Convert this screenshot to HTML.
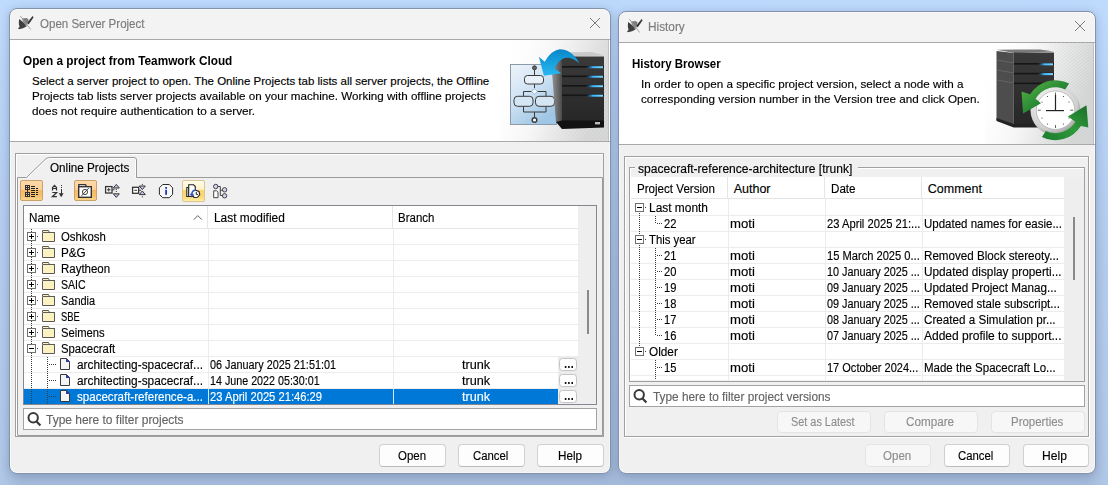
<!DOCTYPE html>
<html><head><meta charset="utf-8">
<style>
*{margin:0;padding:0;box-sizing:border-box}
html,body{width:1108px;height:485px;overflow:hidden}
body{position:relative;font-family:"Liberation Sans",sans-serif;font-size:11.5px;color:#000;
background:linear-gradient(90deg,rgba(200,225,255,.35) 0,rgba(200,225,255,0) 2%,rgba(200,225,255,0) 98%,rgba(200,225,255,.35) 100%),linear-gradient(180deg,#bcd8fb 0%,#b3cef3 15%,#a9c1e4 55%,#a4badb 100%)}
.a{position:absolute}
.t{position:absolute;white-space:nowrap;line-height:16px;height:16px;transform-origin:0 0;-webkit-text-stroke:0.15px currentColor}
.win{position:absolute;background:linear-gradient(#f3f3f3 0,#f3f3f3 30px,#f0f0f0 30px);border:1px solid #8294ad;border-radius:8px;
box-shadow:inset 0 0 0 1px #f8f8f8,0 2px 8px rgba(40,55,85,.24)}
.btn{position:absolute;background:#fdfdfd;border:1px solid #d0d0d0;border-bottom-color:#bcbcbc;border-radius:4px}
.btn.dis{background:#f7f7f7;border-color:#e4e4e4}
svg.ov{position:absolute;left:0;top:0;overflow:visible}
</style></head><body>

<div class="win" style="left:9px;top:8px;width:602px;height:466px"></div>
<div class="win" style="left:618px;top:11px;width:478px;height:463px"></div>

<svg class="ov" width="1108" height="485" shape-rendering="crispEdges"><rect x="10" y="39" width="600" height="1" fill="#a9a9a9"/>
<rect x="10" y="40" width="600" height="101" fill="#ffffff"/>
<rect x="10" y="141" width="600" height="1" fill="#a9a9a9"/>
<rect x="15" y="153" width="589" height="1" fill="#a0a0a0"/>
<rect x="15" y="436" width="589" height="1" fill="#a0a0a0"/>
<rect x="15" y="153" width="1" height="284" fill="#a0a0a0"/>
<rect x="603" y="153" width="1" height="284" fill="#a0a0a0"/>
<rect x="16" y="154" width="587" height="1" fill="#ffffff"/>
<rect x="16" y="154" width="1" height="282" fill="#ffffff"/>
<path d="M28.5 177.5 L45.8 160.2 Q47.8 158.5 50.5 158.5 H135.5 V177" fill="none" stroke="#ffffff" shape-rendering="geometricPrecision"/>
<path d="M17.5 435 V177.5 H26.5 L45 159.6 Q47 157.5 49.5 157.5 H134 Q136.5 157.5 136.5 160 V177.5 H602.5 V435.5 H17.5" fill="none" stroke="#9a9a9a" shape-rendering="geometricPrecision"/>
<rect x="23" y="205" width="574" height="200" fill="#828790"/>
<rect x="24" y="206" width="572" height="198" fill="#ffffff"/>
<rect x="578" y="206" width="18" height="198" fill="#eeeeee"/>
<rect x="587" y="290" width="2" height="44" fill="#8a8a8a"/>
<rect x="207" y="206" width="1" height="22" fill="#e5e5e5"/>
<rect x="392" y="206" width="1" height="22" fill="#e5e5e5"/>
<rect x="24" y="228" width="554" height="1" fill="#e5e5e5"/>
<rect x="24" y="244" width="554" height="1" fill="#ececec"/>
<rect x="24" y="260" width="554" height="1" fill="#ececec"/>
<rect x="24" y="276" width="554" height="1" fill="#ececec"/>
<rect x="24" y="292" width="554" height="1" fill="#ececec"/>
<rect x="24" y="308" width="554" height="1" fill="#ececec"/>
<rect x="24" y="324" width="554" height="1" fill="#ececec"/>
<rect x="24" y="340" width="554" height="1" fill="#ececec"/>
<rect x="24" y="356" width="554" height="1" fill="#ececec"/>
<rect x="24" y="372" width="554" height="1" fill="#ececec"/>
<rect x="24" y="388" width="554" height="1" fill="#ececec"/>
<rect x="208" y="229" width="1" height="175" fill="#ececec"/>
<rect x="393" y="229" width="1" height="175" fill="#ececec"/>
<rect x="24" y="389" width="534" height="15" fill="#0078d7"/>
<rect x="208" y="389" width="1" height="15" fill="#d8e8f8"/>
<rect x="393" y="389" width="1" height="15" fill="#d8e8f8"/>
<path d="M193.8 219.6 L197.8 215.6 L201.8 219.6" fill="none" stroke="#606060" shape-rendering="geometricPrecision"/>
<rect x="31" y="229" width="1" height="1" fill="#3c3c3c"/>
<rect x="31" y="231" width="1" height="1" fill="#3c3c3c"/>
<rect x="31" y="233" width="1" height="1" fill="#3c3c3c"/>
<rect x="31" y="235" width="1" height="1" fill="#3c3c3c"/>
<rect x="31" y="237" width="1" height="1" fill="#3c3c3c"/>
<rect x="31" y="239" width="1" height="1" fill="#3c3c3c"/>
<rect x="31" y="241" width="1" height="1" fill="#3c3c3c"/>
<rect x="31" y="243" width="1" height="1" fill="#3c3c3c"/>
<rect x="31" y="245" width="1" height="1" fill="#3c3c3c"/>
<rect x="31" y="247" width="1" height="1" fill="#3c3c3c"/>
<rect x="31" y="249" width="1" height="1" fill="#3c3c3c"/>
<rect x="31" y="251" width="1" height="1" fill="#3c3c3c"/>
<rect x="31" y="253" width="1" height="1" fill="#3c3c3c"/>
<rect x="31" y="255" width="1" height="1" fill="#3c3c3c"/>
<rect x="31" y="257" width="1" height="1" fill="#3c3c3c"/>
<rect x="31" y="259" width="1" height="1" fill="#3c3c3c"/>
<rect x="31" y="261" width="1" height="1" fill="#3c3c3c"/>
<rect x="31" y="263" width="1" height="1" fill="#3c3c3c"/>
<rect x="31" y="265" width="1" height="1" fill="#3c3c3c"/>
<rect x="31" y="267" width="1" height="1" fill="#3c3c3c"/>
<rect x="31" y="269" width="1" height="1" fill="#3c3c3c"/>
<rect x="31" y="271" width="1" height="1" fill="#3c3c3c"/>
<rect x="31" y="273" width="1" height="1" fill="#3c3c3c"/>
<rect x="31" y="275" width="1" height="1" fill="#3c3c3c"/>
<rect x="31" y="277" width="1" height="1" fill="#3c3c3c"/>
<rect x="31" y="279" width="1" height="1" fill="#3c3c3c"/>
<rect x="31" y="281" width="1" height="1" fill="#3c3c3c"/>
<rect x="31" y="283" width="1" height="1" fill="#3c3c3c"/>
<rect x="31" y="285" width="1" height="1" fill="#3c3c3c"/>
<rect x="31" y="287" width="1" height="1" fill="#3c3c3c"/>
<rect x="31" y="289" width="1" height="1" fill="#3c3c3c"/>
<rect x="31" y="291" width="1" height="1" fill="#3c3c3c"/>
<rect x="31" y="293" width="1" height="1" fill="#3c3c3c"/>
<rect x="31" y="295" width="1" height="1" fill="#3c3c3c"/>
<rect x="31" y="297" width="1" height="1" fill="#3c3c3c"/>
<rect x="31" y="299" width="1" height="1" fill="#3c3c3c"/>
<rect x="31" y="301" width="1" height="1" fill="#3c3c3c"/>
<rect x="31" y="303" width="1" height="1" fill="#3c3c3c"/>
<rect x="31" y="305" width="1" height="1" fill="#3c3c3c"/>
<rect x="31" y="307" width="1" height="1" fill="#3c3c3c"/>
<rect x="31" y="309" width="1" height="1" fill="#3c3c3c"/>
<rect x="31" y="311" width="1" height="1" fill="#3c3c3c"/>
<rect x="31" y="313" width="1" height="1" fill="#3c3c3c"/>
<rect x="31" y="315" width="1" height="1" fill="#3c3c3c"/>
<rect x="31" y="317" width="1" height="1" fill="#3c3c3c"/>
<rect x="31" y="319" width="1" height="1" fill="#3c3c3c"/>
<rect x="31" y="321" width="1" height="1" fill="#3c3c3c"/>
<rect x="31" y="323" width="1" height="1" fill="#3c3c3c"/>
<rect x="31" y="325" width="1" height="1" fill="#3c3c3c"/>
<rect x="31" y="327" width="1" height="1" fill="#3c3c3c"/>
<rect x="31" y="329" width="1" height="1" fill="#3c3c3c"/>
<rect x="31" y="331" width="1" height="1" fill="#3c3c3c"/>
<rect x="31" y="333" width="1" height="1" fill="#3c3c3c"/>
<rect x="31" y="335" width="1" height="1" fill="#3c3c3c"/>
<rect x="31" y="337" width="1" height="1" fill="#3c3c3c"/>
<rect x="31" y="339" width="1" height="1" fill="#3c3c3c"/>
<rect x="31" y="341" width="1" height="1" fill="#3c3c3c"/>
<rect x="31" y="343" width="1" height="1" fill="#3c3c3c"/>
<rect x="31" y="345" width="1" height="1" fill="#3c3c3c"/>
<rect x="31" y="347" width="1" height="1" fill="#3c3c3c"/>
<rect x="31" y="349" width="1" height="1" fill="#3c3c3c"/>
<rect x="31" y="351" width="1" height="1" fill="#3c3c3c"/>
<rect x="31" y="353" width="1" height="1" fill="#3c3c3c"/>
<rect x="31" y="355" width="1" height="1" fill="#3c3c3c"/>
<rect x="31" y="357" width="1" height="1" fill="#3c3c3c"/>
<rect x="31" y="359" width="1" height="1" fill="#3c3c3c"/>
<rect x="31" y="361" width="1" height="1" fill="#3c3c3c"/>
<rect x="31" y="363" width="1" height="1" fill="#3c3c3c"/>
<rect x="31" y="365" width="1" height="1" fill="#3c3c3c"/>
<rect x="31" y="367" width="1" height="1" fill="#3c3c3c"/>
<rect x="31" y="369" width="1" height="1" fill="#3c3c3c"/>
<rect x="31" y="371" width="1" height="1" fill="#3c3c3c"/>
<rect x="31" y="373" width="1" height="1" fill="#3c3c3c"/>
<rect x="31" y="375" width="1" height="1" fill="#3c3c3c"/>
<rect x="31" y="377" width="1" height="1" fill="#3c3c3c"/>
<rect x="31" y="379" width="1" height="1" fill="#3c3c3c"/>
<rect x="31" y="381" width="1" height="1" fill="#3c3c3c"/>
<rect x="31" y="383" width="1" height="1" fill="#3c3c3c"/>
<rect x="31" y="385" width="1" height="1" fill="#3c3c3c"/>
<rect x="31" y="387" width="1" height="1" fill="#3c3c3c"/>
<rect x="31" y="389" width="1" height="1" fill="#3c3c3c"/>
<rect x="31" y="391" width="1" height="1" fill="#3c3c3c"/>
<rect x="31" y="393" width="1" height="1" fill="#3c3c3c"/>
<rect x="31" y="395" width="1" height="1" fill="#3c3c3c"/>
<rect x="31" y="397" width="1" height="1" fill="#3c3c3c"/>
<rect x="31" y="399" width="1" height="1" fill="#3c3c3c"/>
<rect x="31" y="401" width="1" height="1" fill="#3c3c3c"/>
<rect x="31" y="403" width="1" height="1" fill="#3c3c3c"/>
<rect x="27" y="232" width="9" height="9" fill="#ffffff"/>
<rect x="27" y="232" width="9" height="9" fill="#707070"/>
<rect x="28" y="233" width="7" height="7" fill="#ffffff"/>
<rect x="29" y="236" width="5" height="1" fill="#000"/>
<rect x="31" y="234" width="1" height="5" fill="#000"/>
<rect x="37" y="236" width="1" height="1" fill="#3c3c3c"/>
<path d="M42.5 232.5 V230.5 H48.5 L49.5 232.5 H54.5 V241.5 H42.5 Z" fill="#fcf1c0" stroke="#5a5a5a" shape-rendering="geometricPrecision"/>
<rect x="43" y="232" width="12" height="1" fill="#5a5a5a"/>
<rect x="27" y="248" width="9" height="9" fill="#ffffff"/>
<rect x="27" y="248" width="9" height="9" fill="#707070"/>
<rect x="28" y="249" width="7" height="7" fill="#ffffff"/>
<rect x="29" y="252" width="5" height="1" fill="#000"/>
<rect x="31" y="250" width="1" height="5" fill="#000"/>
<rect x="37" y="252" width="1" height="1" fill="#3c3c3c"/>
<path d="M42.5 248.5 V246.5 H48.5 L49.5 248.5 H54.5 V257.5 H42.5 Z" fill="#fcf1c0" stroke="#5a5a5a" shape-rendering="geometricPrecision"/>
<rect x="43" y="248" width="12" height="1" fill="#5a5a5a"/>
<rect x="27" y="264" width="9" height="9" fill="#ffffff"/>
<rect x="27" y="264" width="9" height="9" fill="#707070"/>
<rect x="28" y="265" width="7" height="7" fill="#ffffff"/>
<rect x="29" y="268" width="5" height="1" fill="#000"/>
<rect x="31" y="266" width="1" height="5" fill="#000"/>
<rect x="37" y="268" width="1" height="1" fill="#3c3c3c"/>
<path d="M42.5 264.5 V262.5 H48.5 L49.5 264.5 H54.5 V273.5 H42.5 Z" fill="#fcf1c0" stroke="#5a5a5a" shape-rendering="geometricPrecision"/>
<rect x="43" y="264" width="12" height="1" fill="#5a5a5a"/>
<rect x="27" y="280" width="9" height="9" fill="#ffffff"/>
<rect x="27" y="280" width="9" height="9" fill="#707070"/>
<rect x="28" y="281" width="7" height="7" fill="#ffffff"/>
<rect x="29" y="284" width="5" height="1" fill="#000"/>
<rect x="31" y="282" width="1" height="5" fill="#000"/>
<rect x="37" y="284" width="1" height="1" fill="#3c3c3c"/>
<path d="M42.5 280.5 V278.5 H48.5 L49.5 280.5 H54.5 V289.5 H42.5 Z" fill="#fcf1c0" stroke="#5a5a5a" shape-rendering="geometricPrecision"/>
<rect x="43" y="280" width="12" height="1" fill="#5a5a5a"/>
<rect x="27" y="296" width="9" height="9" fill="#ffffff"/>
<rect x="27" y="296" width="9" height="9" fill="#707070"/>
<rect x="28" y="297" width="7" height="7" fill="#ffffff"/>
<rect x="29" y="300" width="5" height="1" fill="#000"/>
<rect x="31" y="298" width="1" height="5" fill="#000"/>
<rect x="37" y="300" width="1" height="1" fill="#3c3c3c"/>
<path d="M42.5 296.5 V294.5 H48.5 L49.5 296.5 H54.5 V305.5 H42.5 Z" fill="#fcf1c0" stroke="#5a5a5a" shape-rendering="geometricPrecision"/>
<rect x="43" y="296" width="12" height="1" fill="#5a5a5a"/>
<rect x="27" y="312" width="9" height="9" fill="#ffffff"/>
<rect x="27" y="312" width="9" height="9" fill="#707070"/>
<rect x="28" y="313" width="7" height="7" fill="#ffffff"/>
<rect x="29" y="316" width="5" height="1" fill="#000"/>
<rect x="31" y="314" width="1" height="5" fill="#000"/>
<rect x="37" y="316" width="1" height="1" fill="#3c3c3c"/>
<path d="M42.5 312.5 V310.5 H48.5 L49.5 312.5 H54.5 V321.5 H42.5 Z" fill="#fcf1c0" stroke="#5a5a5a" shape-rendering="geometricPrecision"/>
<rect x="43" y="312" width="12" height="1" fill="#5a5a5a"/>
<rect x="27" y="328" width="9" height="9" fill="#ffffff"/>
<rect x="27" y="328" width="9" height="9" fill="#707070"/>
<rect x="28" y="329" width="7" height="7" fill="#ffffff"/>
<rect x="29" y="332" width="5" height="1" fill="#000"/>
<rect x="31" y="330" width="1" height="5" fill="#000"/>
<rect x="37" y="332" width="1" height="1" fill="#3c3c3c"/>
<path d="M42.5 328.5 V326.5 H48.5 L49.5 328.5 H54.5 V337.5 H42.5 Z" fill="#fcf1c0" stroke="#5a5a5a" shape-rendering="geometricPrecision"/>
<rect x="43" y="328" width="12" height="1" fill="#5a5a5a"/>
<rect x="27" y="344" width="9" height="9" fill="#ffffff"/>
<rect x="27" y="344" width="9" height="9" fill="#707070"/>
<rect x="28" y="345" width="7" height="7" fill="#ffffff"/>
<rect x="29" y="348" width="5" height="1" fill="#000"/>
<rect x="37" y="348" width="1" height="1" fill="#3c3c3c"/>
<path d="M42.5 344.5 V342.5 H48.5 L49.5 344.5 H54.5 V353.5 H42.5 Z" fill="#fcf1c0" stroke="#5a5a5a" shape-rendering="geometricPrecision"/>
<rect x="43" y="344" width="12" height="1" fill="#5a5a5a"/>
<rect x="47" y="357" width="1" height="1" fill="#3c3c3c"/>
<rect x="47" y="359" width="1" height="1" fill="#3c3c3c"/>
<rect x="47" y="361" width="1" height="1" fill="#3c3c3c"/>
<rect x="47" y="363" width="1" height="1" fill="#3c3c3c"/>
<rect x="47" y="365" width="1" height="1" fill="#3c3c3c"/>
<rect x="47" y="367" width="1" height="1" fill="#3c3c3c"/>
<rect x="47" y="369" width="1" height="1" fill="#3c3c3c"/>
<rect x="47" y="371" width="1" height="1" fill="#3c3c3c"/>
<rect x="47" y="373" width="1" height="1" fill="#3c3c3c"/>
<rect x="47" y="375" width="1" height="1" fill="#3c3c3c"/>
<rect x="47" y="377" width="1" height="1" fill="#3c3c3c"/>
<rect x="47" y="379" width="1" height="1" fill="#3c3c3c"/>
<rect x="47" y="381" width="1" height="1" fill="#3c3c3c"/>
<rect x="47" y="383" width="1" height="1" fill="#3c3c3c"/>
<rect x="47" y="385" width="1" height="1" fill="#3c3c3c"/>
<rect x="47" y="387" width="1" height="1" fill="#3c3c3c"/>
<rect x="47" y="389" width="1" height="1" fill="#3c3c3c"/>
<rect x="47" y="391" width="1" height="1" fill="#3c3c3c"/>
<rect x="47" y="393" width="1" height="1" fill="#3c3c3c"/>
<rect x="47" y="395" width="1" height="1" fill="#3c3c3c"/>
<rect x="47" y="397" width="1" height="1" fill="#3c3c3c"/>
<rect x="47" y="399" width="1" height="1" fill="#3c3c3c"/>
<rect x="47" y="401" width="1" height="1" fill="#3c3c3c"/>
<rect x="47" y="403" width="1" height="1" fill="#3c3c3c"/>
<rect x="49" y="364" width="1" height="1" fill="#3c3c3c"/>
<rect x="51" y="364" width="1" height="1" fill="#3c3c3c"/>
<rect x="53" y="364" width="1" height="1" fill="#3c3c3c"/>
<rect x="55" y="364" width="1" height="1" fill="#3c3c3c"/>
<path d="M60.5 358.5 H66.5 L69.5 361.5 V369.5 H60.5 Z" fill="#f4f4f4" stroke="#3a3a3a" shape-rendering="geometricPrecision"/>
<path d="M66 358 L70 362 H66 Z" fill="#2c3e9e" shape-rendering="geometricPrecision"/>
<rect x="558" y="357" width="20" height="15" fill="#ececec"/>
<rect x="559.5" y="358.5" width="17" height="12" rx="3" fill="#fff" stroke="#c4c4c4" shape-rendering="geometricPrecision"/>
<rect x="564.8" y="366" width="1.6" height="2" fill="#111" shape-rendering="geometricPrecision"/>
<rect x="568.0999999999999" y="366" width="1.6" height="2" fill="#111" shape-rendering="geometricPrecision"/>
<rect x="571.4" y="366" width="1.6" height="2" fill="#111" shape-rendering="geometricPrecision"/>
<rect x="49" y="380" width="1" height="1" fill="#3c3c3c"/>
<rect x="51" y="380" width="1" height="1" fill="#3c3c3c"/>
<rect x="53" y="380" width="1" height="1" fill="#3c3c3c"/>
<rect x="55" y="380" width="1" height="1" fill="#3c3c3c"/>
<path d="M60.5 374.5 H66.5 L69.5 377.5 V385.5 H60.5 Z" fill="#f4f4f4" stroke="#3a3a3a" shape-rendering="geometricPrecision"/>
<path d="M66 374 L70 378 H66 Z" fill="#2c3e9e" shape-rendering="geometricPrecision"/>
<rect x="558" y="373" width="20" height="15" fill="#ececec"/>
<rect x="559.5" y="374.5" width="17" height="12" rx="3" fill="#fff" stroke="#c4c4c4" shape-rendering="geometricPrecision"/>
<rect x="564.8" y="382" width="1.6" height="2" fill="#111" shape-rendering="geometricPrecision"/>
<rect x="568.0999999999999" y="382" width="1.6" height="2" fill="#111" shape-rendering="geometricPrecision"/>
<rect x="571.4" y="382" width="1.6" height="2" fill="#111" shape-rendering="geometricPrecision"/>
<rect x="49" y="396" width="1" height="1" fill="#3c3c3c"/>
<rect x="51" y="396" width="1" height="1" fill="#3c3c3c"/>
<rect x="53" y="396" width="1" height="1" fill="#3c3c3c"/>
<rect x="55" y="396" width="1" height="1" fill="#3c3c3c"/>
<path d="M60.5 390.5 H66.5 L69.5 393.5 V401.5 H60.5 Z" fill="#f4f4f4" stroke="#3a3a3a" shape-rendering="geometricPrecision"/>
<path d="M66 390 L70 394 H66 Z" fill="#2c3e9e" shape-rendering="geometricPrecision"/>
<rect x="558" y="389" width="20" height="15" fill="#ececec"/>
<rect x="559.5" y="390.5" width="17" height="12" rx="3" fill="#fff" stroke="#c4c4c4" shape-rendering="geometricPrecision"/>
<rect x="564.8" y="398" width="1.6" height="2" fill="#111" shape-rendering="geometricPrecision"/>
<rect x="568.0999999999999" y="398" width="1.6" height="2" fill="#111" shape-rendering="geometricPrecision"/>
<rect x="571.4" y="398" width="1.6" height="2" fill="#111" shape-rendering="geometricPrecision"/>
<rect x="23" y="408" width="574" height="22" fill="#a3a3a3"/>
<rect x="24" y="409" width="572" height="20" fill="#ffffff"/>
<g shape-rendering="geometricPrecision"><circle cx="33.2" cy="417.8" r="4.7" fill="none" stroke="#3a3a3a" stroke-width="2"/><path d="M36.6 421.4 L40.4 425.4" stroke="#3a3a3a" stroke-width="2.2"/></g>
<path d="M590 18 L600 28 M600 18 L590 28" stroke="#767676" stroke-width="0.95" shape-rendering="geometricPrecision"/>
<rect x="619" y="42" width="476" height="1" fill="#a9a9a9"/>
<rect x="619" y="43" width="476" height="101" fill="#ffffff"/>
<rect x="619" y="144" width="476" height="1" fill="#a9a9a9"/>
<path d="M1075 21 L1085 31 M1085 21 L1075 31" stroke="#767676" stroke-width="0.95" shape-rendering="geometricPrecision"/>
<rect x="624" y="156" width="465" height="1" fill="#a0a0a0"/>
<rect x="624" y="436" width="465" height="1" fill="#a0a0a0"/>
<rect x="624" y="156" width="1" height="281" fill="#a0a0a0"/>
<rect x="1088" y="156" width="1" height="281" fill="#a0a0a0"/>
<rect x="625" y="157" width="463" height="1" fill="#ffffff"/>
<rect x="625" y="157" width="1" height="279" fill="#ffffff"/>
<rect x="624" y="437" width="466" height="1" fill="#ffffff"/>
<rect x="1089" y="156" width="1" height="282" fill="#ffffff"/>
<rect x="629" y="167" width="1" height="215" fill="#a0a0a0"/>
<rect x="630" y="168" width="1" height="213" fill="#ffffff"/>
<rect x="629" y="167" width="6" height="1" fill="#a0a0a0"/>
<rect x="630" y="168" width="5" height="1" fill="#ffffff"/>
<rect x="858" y="167" width="227" height="1" fill="#a0a0a0"/>
<rect x="858" y="168" width="226" height="1" fill="#ffffff"/>
<rect x="1084" y="167" width="1" height="215" fill="#a0a0a0"/>
<rect x="629" y="381" width="456" height="1" fill="#a0a0a0"/>
<rect x="631" y="177" width="452" height="203" fill="#ffffff"/>
<rect x="1064" y="177" width="20" height="203" fill="#eeeeee"/>
<rect x="1073" y="217" width="2" height="63" fill="#8a8a8a"/>
<rect x="631" y="198" width="433" height="1" fill="#e5e5e5"/>
<rect x="727" y="177" width="1" height="21" fill="#e5e5e5"/>
<rect x="824" y="177" width="1" height="21" fill="#e5e5e5"/>
<rect x="921" y="177" width="1" height="21" fill="#e5e5e5"/>
<rect x="631" y="215" width="433" height="1" fill="#ececec"/>
<rect x="631" y="231" width="433" height="1" fill="#ececec"/>
<rect x="631" y="247" width="433" height="1" fill="#ececec"/>
<rect x="631" y="263" width="433" height="1" fill="#ececec"/>
<rect x="631" y="279" width="433" height="1" fill="#ececec"/>
<rect x="631" y="295" width="433" height="1" fill="#ececec"/>
<rect x="631" y="311" width="433" height="1" fill="#ececec"/>
<rect x="631" y="327" width="433" height="1" fill="#ececec"/>
<rect x="631" y="343" width="433" height="1" fill="#ececec"/>
<rect x="631" y="359" width="433" height="1" fill="#ececec"/>
<rect x="631" y="375" width="433" height="1" fill="#ececec"/>
<rect x="728" y="199" width="1" height="181" fill="#ececec"/>
<rect x="825" y="199" width="1" height="181" fill="#ececec"/>
<rect x="922" y="199" width="1" height="181" fill="#ececec"/>
<rect x="639" y="213" width="1" height="1" fill="#3c3c3c"/>
<rect x="639" y="215" width="1" height="1" fill="#3c3c3c"/>
<rect x="639" y="217" width="1" height="1" fill="#3c3c3c"/>
<rect x="639" y="219" width="1" height="1" fill="#3c3c3c"/>
<rect x="639" y="221" width="1" height="1" fill="#3c3c3c"/>
<rect x="639" y="223" width="1" height="1" fill="#3c3c3c"/>
<rect x="639" y="225" width="1" height="1" fill="#3c3c3c"/>
<rect x="639" y="227" width="1" height="1" fill="#3c3c3c"/>
<rect x="639" y="229" width="1" height="1" fill="#3c3c3c"/>
<rect x="639" y="231" width="1" height="1" fill="#3c3c3c"/>
<rect x="639" y="233" width="1" height="1" fill="#3c3c3c"/>
<rect x="639" y="235" width="1" height="1" fill="#3c3c3c"/>
<rect x="639" y="237" width="1" height="1" fill="#3c3c3c"/>
<rect x="639" y="239" width="1" height="1" fill="#3c3c3c"/>
<rect x="639" y="241" width="1" height="1" fill="#3c3c3c"/>
<rect x="639" y="243" width="1" height="1" fill="#3c3c3c"/>
<rect x="639" y="245" width="1" height="1" fill="#3c3c3c"/>
<rect x="639" y="247" width="1" height="1" fill="#3c3c3c"/>
<rect x="639" y="249" width="1" height="1" fill="#3c3c3c"/>
<rect x="639" y="251" width="1" height="1" fill="#3c3c3c"/>
<rect x="639" y="253" width="1" height="1" fill="#3c3c3c"/>
<rect x="639" y="255" width="1" height="1" fill="#3c3c3c"/>
<rect x="639" y="257" width="1" height="1" fill="#3c3c3c"/>
<rect x="639" y="259" width="1" height="1" fill="#3c3c3c"/>
<rect x="639" y="261" width="1" height="1" fill="#3c3c3c"/>
<rect x="639" y="263" width="1" height="1" fill="#3c3c3c"/>
<rect x="639" y="265" width="1" height="1" fill="#3c3c3c"/>
<rect x="639" y="267" width="1" height="1" fill="#3c3c3c"/>
<rect x="639" y="269" width="1" height="1" fill="#3c3c3c"/>
<rect x="639" y="271" width="1" height="1" fill="#3c3c3c"/>
<rect x="639" y="273" width="1" height="1" fill="#3c3c3c"/>
<rect x="639" y="275" width="1" height="1" fill="#3c3c3c"/>
<rect x="639" y="277" width="1" height="1" fill="#3c3c3c"/>
<rect x="639" y="279" width="1" height="1" fill="#3c3c3c"/>
<rect x="639" y="281" width="1" height="1" fill="#3c3c3c"/>
<rect x="639" y="283" width="1" height="1" fill="#3c3c3c"/>
<rect x="639" y="285" width="1" height="1" fill="#3c3c3c"/>
<rect x="639" y="287" width="1" height="1" fill="#3c3c3c"/>
<rect x="639" y="289" width="1" height="1" fill="#3c3c3c"/>
<rect x="639" y="291" width="1" height="1" fill="#3c3c3c"/>
<rect x="639" y="293" width="1" height="1" fill="#3c3c3c"/>
<rect x="639" y="295" width="1" height="1" fill="#3c3c3c"/>
<rect x="639" y="297" width="1" height="1" fill="#3c3c3c"/>
<rect x="639" y="299" width="1" height="1" fill="#3c3c3c"/>
<rect x="639" y="301" width="1" height="1" fill="#3c3c3c"/>
<rect x="639" y="303" width="1" height="1" fill="#3c3c3c"/>
<rect x="639" y="305" width="1" height="1" fill="#3c3c3c"/>
<rect x="639" y="307" width="1" height="1" fill="#3c3c3c"/>
<rect x="639" y="309" width="1" height="1" fill="#3c3c3c"/>
<rect x="639" y="311" width="1" height="1" fill="#3c3c3c"/>
<rect x="639" y="313" width="1" height="1" fill="#3c3c3c"/>
<rect x="639" y="315" width="1" height="1" fill="#3c3c3c"/>
<rect x="639" y="317" width="1" height="1" fill="#3c3c3c"/>
<rect x="639" y="319" width="1" height="1" fill="#3c3c3c"/>
<rect x="639" y="321" width="1" height="1" fill="#3c3c3c"/>
<rect x="639" y="323" width="1" height="1" fill="#3c3c3c"/>
<rect x="639" y="325" width="1" height="1" fill="#3c3c3c"/>
<rect x="639" y="327" width="1" height="1" fill="#3c3c3c"/>
<rect x="639" y="329" width="1" height="1" fill="#3c3c3c"/>
<rect x="639" y="331" width="1" height="1" fill="#3c3c3c"/>
<rect x="639" y="333" width="1" height="1" fill="#3c3c3c"/>
<rect x="639" y="335" width="1" height="1" fill="#3c3c3c"/>
<rect x="639" y="337" width="1" height="1" fill="#3c3c3c"/>
<rect x="639" y="339" width="1" height="1" fill="#3c3c3c"/>
<rect x="639" y="341" width="1" height="1" fill="#3c3c3c"/>
<rect x="639" y="343" width="1" height="1" fill="#3c3c3c"/>
<rect x="639" y="345" width="1" height="1" fill="#3c3c3c"/>
<rect x="635" y="204" width="9" height="9" fill="#fff"/>
<rect x="635" y="203" width="9" height="9" fill="#707070"/>
<rect x="636" y="204" width="7" height="7" fill="#ffffff"/>
<rect x="637" y="207" width="5" height="1" fill="#000"/>
<rect x="645" y="207" width="1" height="1" fill="#3c3c3c"/>
<rect x="657" y="223" width="1" height="1" fill="#3c3c3c"/>
<rect x="659" y="223" width="1" height="1" fill="#3c3c3c"/>
<rect x="661" y="223" width="1" height="1" fill="#3c3c3c"/>
<rect x="635" y="236" width="9" height="9" fill="#fff"/>
<rect x="635" y="235" width="9" height="9" fill="#707070"/>
<rect x="636" y="236" width="7" height="7" fill="#ffffff"/>
<rect x="637" y="239" width="5" height="1" fill="#000"/>
<rect x="645" y="239" width="1" height="1" fill="#3c3c3c"/>
<rect x="657" y="255" width="1" height="1" fill="#3c3c3c"/>
<rect x="659" y="255" width="1" height="1" fill="#3c3c3c"/>
<rect x="661" y="255" width="1" height="1" fill="#3c3c3c"/>
<rect x="657" y="271" width="1" height="1" fill="#3c3c3c"/>
<rect x="659" y="271" width="1" height="1" fill="#3c3c3c"/>
<rect x="661" y="271" width="1" height="1" fill="#3c3c3c"/>
<rect x="657" y="287" width="1" height="1" fill="#3c3c3c"/>
<rect x="659" y="287" width="1" height="1" fill="#3c3c3c"/>
<rect x="661" y="287" width="1" height="1" fill="#3c3c3c"/>
<rect x="657" y="303" width="1" height="1" fill="#3c3c3c"/>
<rect x="659" y="303" width="1" height="1" fill="#3c3c3c"/>
<rect x="661" y="303" width="1" height="1" fill="#3c3c3c"/>
<rect x="657" y="319" width="1" height="1" fill="#3c3c3c"/>
<rect x="659" y="319" width="1" height="1" fill="#3c3c3c"/>
<rect x="661" y="319" width="1" height="1" fill="#3c3c3c"/>
<rect x="657" y="335" width="1" height="1" fill="#3c3c3c"/>
<rect x="659" y="335" width="1" height="1" fill="#3c3c3c"/>
<rect x="661" y="335" width="1" height="1" fill="#3c3c3c"/>
<rect x="635" y="348" width="9" height="9" fill="#fff"/>
<rect x="635" y="347" width="9" height="9" fill="#707070"/>
<rect x="636" y="348" width="7" height="7" fill="#ffffff"/>
<rect x="637" y="351" width="5" height="1" fill="#000"/>
<rect x="645" y="351" width="1" height="1" fill="#3c3c3c"/>
<rect x="657" y="367" width="1" height="1" fill="#3c3c3c"/>
<rect x="659" y="367" width="1" height="1" fill="#3c3c3c"/>
<rect x="661" y="367" width="1" height="1" fill="#3c3c3c"/>
<rect x="655" y="216" width="1" height="1" fill="#3c3c3c"/>
<rect x="655" y="218" width="1" height="1" fill="#3c3c3c"/>
<rect x="655" y="220" width="1" height="1" fill="#3c3c3c"/>
<rect x="655" y="222" width="1" height="1" fill="#3c3c3c"/>
<rect x="655" y="248" width="1" height="1" fill="#3c3c3c"/>
<rect x="655" y="250" width="1" height="1" fill="#3c3c3c"/>
<rect x="655" y="252" width="1" height="1" fill="#3c3c3c"/>
<rect x="655" y="254" width="1" height="1" fill="#3c3c3c"/>
<rect x="655" y="256" width="1" height="1" fill="#3c3c3c"/>
<rect x="655" y="258" width="1" height="1" fill="#3c3c3c"/>
<rect x="655" y="260" width="1" height="1" fill="#3c3c3c"/>
<rect x="655" y="262" width="1" height="1" fill="#3c3c3c"/>
<rect x="655" y="264" width="1" height="1" fill="#3c3c3c"/>
<rect x="655" y="266" width="1" height="1" fill="#3c3c3c"/>
<rect x="655" y="268" width="1" height="1" fill="#3c3c3c"/>
<rect x="655" y="270" width="1" height="1" fill="#3c3c3c"/>
<rect x="655" y="272" width="1" height="1" fill="#3c3c3c"/>
<rect x="655" y="274" width="1" height="1" fill="#3c3c3c"/>
<rect x="655" y="276" width="1" height="1" fill="#3c3c3c"/>
<rect x="655" y="278" width="1" height="1" fill="#3c3c3c"/>
<rect x="655" y="280" width="1" height="1" fill="#3c3c3c"/>
<rect x="655" y="282" width="1" height="1" fill="#3c3c3c"/>
<rect x="655" y="284" width="1" height="1" fill="#3c3c3c"/>
<rect x="655" y="286" width="1" height="1" fill="#3c3c3c"/>
<rect x="655" y="288" width="1" height="1" fill="#3c3c3c"/>
<rect x="655" y="290" width="1" height="1" fill="#3c3c3c"/>
<rect x="655" y="292" width="1" height="1" fill="#3c3c3c"/>
<rect x="655" y="294" width="1" height="1" fill="#3c3c3c"/>
<rect x="655" y="296" width="1" height="1" fill="#3c3c3c"/>
<rect x="655" y="298" width="1" height="1" fill="#3c3c3c"/>
<rect x="655" y="300" width="1" height="1" fill="#3c3c3c"/>
<rect x="655" y="302" width="1" height="1" fill="#3c3c3c"/>
<rect x="655" y="304" width="1" height="1" fill="#3c3c3c"/>
<rect x="655" y="306" width="1" height="1" fill="#3c3c3c"/>
<rect x="655" y="308" width="1" height="1" fill="#3c3c3c"/>
<rect x="655" y="310" width="1" height="1" fill="#3c3c3c"/>
<rect x="655" y="312" width="1" height="1" fill="#3c3c3c"/>
<rect x="655" y="314" width="1" height="1" fill="#3c3c3c"/>
<rect x="655" y="316" width="1" height="1" fill="#3c3c3c"/>
<rect x="655" y="318" width="1" height="1" fill="#3c3c3c"/>
<rect x="655" y="320" width="1" height="1" fill="#3c3c3c"/>
<rect x="655" y="322" width="1" height="1" fill="#3c3c3c"/>
<rect x="655" y="324" width="1" height="1" fill="#3c3c3c"/>
<rect x="655" y="326" width="1" height="1" fill="#3c3c3c"/>
<rect x="655" y="328" width="1" height="1" fill="#3c3c3c"/>
<rect x="655" y="330" width="1" height="1" fill="#3c3c3c"/>
<rect x="655" y="332" width="1" height="1" fill="#3c3c3c"/>
<rect x="655" y="334" width="1" height="1" fill="#3c3c3c"/>
<rect x="655" y="360" width="1" height="1" fill="#3c3c3c"/>
<rect x="655" y="362" width="1" height="1" fill="#3c3c3c"/>
<rect x="655" y="364" width="1" height="1" fill="#3c3c3c"/>
<rect x="655" y="366" width="1" height="1" fill="#3c3c3c"/>
<rect x="655" y="368" width="1" height="1" fill="#3c3c3c"/>
<rect x="655" y="370" width="1" height="1" fill="#3c3c3c"/>
<rect x="655" y="372" width="1" height="1" fill="#3c3c3c"/>
<rect x="655" y="374" width="1" height="1" fill="#3c3c3c"/>
<rect x="655" y="376" width="1" height="1" fill="#3c3c3c"/>
<rect x="655" y="378" width="1" height="1" fill="#3c3c3c"/>
<rect x="629" y="385" width="456" height="22" fill="#a3a3a3"/>
<rect x="630" y="386" width="454" height="20" fill="#ffffff"/>
<g shape-rendering="geometricPrecision"><circle cx="639.2" cy="394.8" r="4.7" fill="none" stroke="#3a3a3a" stroke-width="2"/><path d="M642.6 398.4 L646.4 402.4" stroke="#3a3a3a" stroke-width="2.2"/></g></svg>
<div class="t" style="left:22.60px;top:53px;font-size:12px;color:#000;font-weight:bold;-webkit-text-stroke:0;transform:scaleX(0.9820);">Open a project from Teamwork Cloud</div>
<div class="t" style="left:32.00px;top:73px;font-size:11.5px;color:#000;">Select a server project to open. The Online Projects tab lists all server projects, the Offline</div>
<div class="t" style="left:32.00px;top:88px;font-size:11.5px;color:#000;transform:scaleX(1.0122);">Projects tab lists server projects available on your machine. Working with offline projects</div>
<div class="t" style="left:32.00px;top:103px;font-size:11.5px;color:#000;transform:scaleX(1.0235);">does not require authentication to a server.</div>
<div class="t" style="left:49.90px;top:160px;font-size:12px;color:#000;transform:scaleX(0.9746);">Online Projects</div>
<div class="a" style="left:20px;top:180px;width:23px;height:21px;border:1px solid #c9a26a;border-radius:2px;background:linear-gradient(#fdd9aa 0%,#fccf98 45%,#f6b862 50%,#f7c170 80%,#fad58a 100%)"></div>
<div class="a" style="left:74px;top:180px;width:23px;height:21px;border:1px solid #c9a26a;border-radius:2px;background:linear-gradient(#fdd9aa 0%,#fccf98 45%,#f6b862 50%,#f7c170 80%,#fad58a 100%)"></div>
<div class="a" style="left:182px;top:180px;width:23px;height:22px;border:1px solid #dcc690;border-radius:2px;background:linear-gradient(#fffcee 0%,#fff2c6 42%,#fcd46c 48%,#fcd877 80%,#fff0a8 100%)"></div>
<div class="t" style="left:29.20px;top:210px;font-size:12.5px;color:#000;transform:scaleX(0.9298);">Name</div>
<div class="t" style="left:214.00px;top:210px;font-size:12.5px;color:#000;transform:scaleX(0.9524);">Last modified</div>
<div class="t" style="left:398.40px;top:210px;font-size:12.5px;color:#000;transform:scaleX(0.9191);">Branch</div>
<div class="t" style="left:60.70px;top:229px;font-size:12.5px;color:#000;transform:scaleX(0.9082);">Oshkosh</div>
<div class="t" style="left:60.70px;top:245px;font-size:12.5px;color:#000;transform:scaleX(0.9357);">P&amp;G</div>
<div class="t" style="left:60.70px;top:261px;font-size:12.5px;color:#000;transform:scaleX(0.9177);">Raytheon</div>
<div class="t" style="left:60.70px;top:277px;font-size:12.5px;color:#000;transform:scaleX(0.8466);">SAIC</div>
<div class="t" style="left:60.70px;top:293px;font-size:12.5px;color:#000;transform:scaleX(0.8762);">Sandia</div>
<div class="t" style="left:60.70px;top:309px;font-size:12.5px;color:#000;transform:scaleX(0.7516);">SBE</div>
<div class="t" style="left:60.70px;top:325px;font-size:12.5px;color:#000;transform:scaleX(0.8986);">Seimens</div>
<div class="t" style="left:60.70px;top:341px;font-size:12.5px;color:#000;transform:scaleX(0.9071);">Spacecraft</div>
<div class="t" style="left:76.70px;top:357px;font-size:12.5px;color:#000;transform:scaleX(0.9496);">architecting-spacecraf...</div>
<div class="t" style="left:209.70px;top:357px;font-size:12.5px;color:#000;transform:scaleX(0.8675);">06 January 2025 21:51:01</div>
<div class="t" style="left:461.50px;top:357px;font-size:12.5px;color:#000;transform:scaleX(1.0149);">trunk</div>
<div class="t" style="left:76.70px;top:373px;font-size:12.5px;color:#000;transform:scaleX(0.9496);">architecting-spacecraf...</div>
<div class="t" style="left:209.70px;top:373px;font-size:12.5px;color:#000;transform:scaleX(0.8578);">14 June 2022 05:30:01</div>
<div class="t" style="left:461.50px;top:373px;font-size:12.5px;color:#000;transform:scaleX(1.0149);">trunk</div>
<div class="t" style="left:76.70px;top:389px;font-size:12.5px;color:#fff;transform:scaleX(0.9254);">spacecraft-reference-a...</div>
<div class="t" style="left:209.70px;top:389px;font-size:12.5px;color:#fff;transform:scaleX(0.8953);">23 April 2025 21:46:29</div>
<div class="t" style="left:461.50px;top:389px;font-size:12.5px;color:#fff;transform:scaleX(1.0149);">trunk</div>
<div class="t" style="left:46.40px;top:412px;font-size:12.5px;color:#646464;transform:scaleX(0.9568);">Type here to filter projects</div>
<div class="btn" style="left:379px;top:444px;width:67px;height:23px"></div>
<div class="t" style="left:398.10px;top:448px;font-size:12px;color:#000;transform:scaleX(0.9539);">Open</div>
<div class="btn" style="left:458px;top:444px;width:67px;height:23px"></div>
<div class="t" style="left:472.80px;top:448px;font-size:12px;color:#000;transform:scaleX(0.9451);">Cancel</div>
<div class="btn" style="left:537px;top:444px;width:67px;height:23px"></div>
<div class="t" style="left:557.90px;top:448px;font-size:12px;color:#000;transform:scaleX(0.9725);">Help</div>
<div class="t" style="left:39.60px;top:16px;font-size:12px;color:#7b7b7b;transform:scaleX(0.9613);">Open Server Project</div>
<div class="t" style="left:648.30px;top:19px;font-size:12px;color:#7b7b7b;transform:scaleX(0.9830);">History</div>
<div class="t" style="left:632.20px;top:56px;font-size:12px;color:#000;font-weight:bold;-webkit-text-stroke:0;transform:scaleX(0.9558);">History Browser</div>
<div class="t" style="left:641.00px;top:76px;font-size:11.5px;color:#000;transform:scaleX(1.0128);">In order to open a specific project version, select a node with a</div>
<div class="t" style="left:641.00px;top:91px;font-size:11.5px;color:#000;transform:scaleX(1.0151);">corresponding version number in the Version tree and click Open.</div>
<div class="t" style="left:637.60px;top:161px;font-size:12.5px;color:#000;transform:scaleX(0.9640);">spacecraft-reference-architecture [trunk]</div>
<div class="t" style="left:636.80px;top:181px;font-size:12.5px;color:#000;transform:scaleX(0.9278);">Project Version</div>
<div class="t" style="left:733.70px;top:181px;font-size:12.5px;color:#000;">Author</div>
<div class="t" style="left:830.70px;top:181px;font-size:12.5px;color:#000;transform:scaleX(0.9279);">Date</div>
<div class="t" style="left:927.80px;top:181px;font-size:12.5px;color:#000;">Comment</div>
<div class="t" style="left:648.80px;top:200px;font-size:12.5px;color:#000;transform:scaleX(0.9541);">Last month</div>
<div class="t" style="left:664.40px;top:216px;font-size:12.5px;color:#000;transform:scaleX(0.8919);">22</div>
<div class="t" style="left:729.60px;top:216px;font-size:12.5px;color:#000;transform:scaleX(1.0503);">moti</div>
<div class="t" style="left:826.60px;top:216px;font-size:12.5px;color:#000;transform:scaleX(0.8961);">23 April 2025 21:...</div>
<div class="t" style="left:924.00px;top:216px;font-size:12.5px;color:#000;transform:scaleX(0.9195);">Updated names for easie...</div>
<div class="t" style="left:648.80px;top:232px;font-size:12.5px;color:#000;transform:scaleX(0.9066);">This year</div>
<div class="t" style="left:664.40px;top:248px;font-size:12.5px;color:#000;transform:scaleX(0.8919);">21</div>
<div class="t" style="left:729.60px;top:248px;font-size:12.5px;color:#000;transform:scaleX(1.0503);">moti</div>
<div class="t" style="left:826.60px;top:248px;font-size:12.5px;color:#000;transform:scaleX(0.8904);">15 March 2025 0...</div>
<div class="t" style="left:924.00px;top:248px;font-size:12.5px;color:#000;transform:scaleX(0.9306);">Removed Block stereoty...</div>
<div class="t" style="left:664.40px;top:264px;font-size:12.5px;color:#000;transform:scaleX(0.8919);">20</div>
<div class="t" style="left:729.60px;top:264px;font-size:12.5px;color:#000;transform:scaleX(1.0503);">moti</div>
<div class="t" style="left:826.60px;top:264px;font-size:12.5px;color:#000;transform:scaleX(0.8672);">10 January 2025 ...</div>
<div class="t" style="left:924.00px;top:264px;font-size:12.5px;color:#000;transform:scaleX(0.9424);">Updated display properti...</div>
<div class="t" style="left:664.40px;top:280px;font-size:12.5px;color:#000;transform:scaleX(0.8919);">19</div>
<div class="t" style="left:729.60px;top:280px;font-size:12.5px;color:#000;transform:scaleX(1.0503);">moti</div>
<div class="t" style="left:826.60px;top:280px;font-size:12.5px;color:#000;transform:scaleX(0.8672);">09 January 2025 ...</div>
<div class="t" style="left:924.00px;top:280px;font-size:12.5px;color:#000;transform:scaleX(0.9362);">Updated Project Manag...</div>
<div class="t" style="left:664.40px;top:296px;font-size:12.5px;color:#000;transform:scaleX(0.8919);">18</div>
<div class="t" style="left:729.60px;top:296px;font-size:12.5px;color:#000;transform:scaleX(1.0503);">moti</div>
<div class="t" style="left:826.60px;top:296px;font-size:12.5px;color:#000;transform:scaleX(0.8672);">09 January 2025 ...</div>
<div class="t" style="left:924.00px;top:296px;font-size:12.5px;color:#000;transform:scaleX(0.9228);">Removed stale subscript...</div>
<div class="t" style="left:664.40px;top:312px;font-size:12.5px;color:#000;transform:scaleX(0.8919);">17</div>
<div class="t" style="left:729.60px;top:312px;font-size:12.5px;color:#000;transform:scaleX(1.0503);">moti</div>
<div class="t" style="left:826.60px;top:312px;font-size:12.5px;color:#000;transform:scaleX(0.8672);">08 January 2025 ...</div>
<div class="t" style="left:924.00px;top:312px;font-size:12.5px;color:#000;transform:scaleX(0.9331);">Created a Simulation pr...</div>
<div class="t" style="left:664.40px;top:328px;font-size:12.5px;color:#000;transform:scaleX(0.8919);">16</div>
<div class="t" style="left:729.60px;top:328px;font-size:12.5px;color:#000;transform:scaleX(1.0503);">moti</div>
<div class="t" style="left:826.60px;top:328px;font-size:12.5px;color:#000;transform:scaleX(0.8672);">07 January 2025 ...</div>
<div class="t" style="left:924.00px;top:328px;font-size:12.5px;color:#000;transform:scaleX(0.9606);">Added profile to support...</div>
<div class="t" style="left:648.80px;top:344px;font-size:12.5px;color:#000;transform:scaleX(0.9423);">Older</div>
<div class="t" style="left:664.40px;top:360px;font-size:12.5px;color:#000;transform:scaleX(0.8919);">15</div>
<div class="t" style="left:729.60px;top:360px;font-size:12.5px;color:#000;transform:scaleX(1.0503);">moti</div>
<div class="t" style="left:826.60px;top:360px;font-size:12.5px;color:#000;transform:scaleX(0.8809);">17 October 2024...</div>
<div class="t" style="left:924.00px;top:360px;font-size:12.5px;color:#000;transform:scaleX(0.9195);">Made the Spacecraft Lo...</div>
<div class="t" style="left:653.40px;top:389px;font-size:12.5px;color:#646464;transform:scaleX(0.9463);">Type here to filter project versions</div>
<div class="btn dis" style="left:777px;top:411px;width:94px;height:22px"></div>
<div class="t" style="left:790.70px;top:414px;font-size:12px;color:#8e8e8e;transform:scaleX(0.9066);">Set as Latest</div>
<div class="btn dis" style="left:884px;top:411px;width:94px;height:22px"></div>
<div class="t" style="left:906.00px;top:414px;font-size:12px;color:#8e8e8e;transform:scaleX(0.9747);">Compare</div>
<div class="btn dis" style="left:991px;top:411px;width:94px;height:22px"></div>
<div class="t" style="left:1011.00px;top:414px;font-size:12px;color:#8e8e8e;transform:scaleX(0.9563);">Properties</div>
<div class="btn dis" style="left:865px;top:444px;width:66px;height:23px"></div>
<div class="t" style="left:882.70px;top:448px;font-size:12px;color:#8e8e8e;transform:scaleX(0.9607);">Open</div>
<div class="btn" style="left:944px;top:444px;width:66px;height:23px"></div>
<div class="t" style="left:958.00px;top:448px;font-size:12px;color:#000;transform:scaleX(0.9451);">Cancel</div>
<div class="btn" style="left:1023px;top:444px;width:66px;height:23px"></div>
<div class="t" style="left:1042.10px;top:448px;font-size:12px;color:#000;transform:scaleX(1.0090);">Help</div>
<svg class="ov" width="1108" height="485" shape-rendering="crispEdges"><rect x="25" y="185" width="5" height="5" fill="#2e2e2e"/><rect x="26" y="186" width="1" height="1" fill="#f0d0a0"/><rect x="26" y="188" width="1" height="1" fill="#f0d0a0"/><rect x="28" y="186" width="1" height="1" fill="#f0d0a0"/><rect x="28" y="188" width="1" height="1" fill="#f0d0a0"/><rect x="25" y="192" width="5" height="5" fill="#2e2e2e"/><rect x="26" y="193" width="1" height="1" fill="#f0d0a0"/><rect x="26" y="195" width="1" height="1" fill="#f0d0a0"/><rect x="28" y="193" width="1" height="1" fill="#f0d0a0"/><rect x="28" y="195" width="1" height="1" fill="#f0d0a0"/><rect x="27" y="190" width="1" height="2" fill="#2e2e2e"/><rect x="31" y="186" width="4" height="1" fill="#1e1e1e"/><rect x="31" y="188" width="4" height="1" fill="#1e1e1e"/><rect x="36" y="188" width="2" height="1" fill="#1e1e1e"/><rect x="31" y="190" width="4" height="1" fill="#1e1e1e"/><rect x="36" y="190" width="2" height="1" fill="#1e1e1e"/><rect x="31" y="192" width="4" height="1" fill="#1e1e1e"/><rect x="36" y="192" width="2" height="1" fill="#1e1e1e"/><rect x="31" y="194" width="4" height="1" fill="#1e1e1e"/><rect x="36" y="194" width="2" height="1" fill="#1e1e1e"/><rect x="31" y="196" width="4" height="1" fill="#1e1e1e"/><g shape-rendering="geometricPrecision" fill="none" stroke="#333" stroke-width="1.2"><path d="M52.5 190.5 L52.5 187.5 L54.5 185.3 L56.5 187.5 L56.5 190.5 M52.5 188.5 H56.5"/><path d="M52.3 192.5 H56.7 L52.3 196.7 H56.9"/></g><rect x="61" y="185" width="1" height="1" fill="#333"/><rect x="61" y="187" width="1" height="1" fill="#333"/><rect x="61" y="189" width="1" height="7" fill="#333"/><path d="M58.8 193.3 H63.6 L61.2 197.2 Z" fill="#333" shape-rendering="geometricPrecision"/><g shape-rendering="geometricPrecision"><path d="M78.8 186.2 V184.6 H85.4 L86.4 186.2" fill="#fff" stroke="#333" stroke-width="1.3"/><rect x="78.7" y="186.7" width="12.6" height="10.6" fill="#fff" stroke="#333" stroke-width="1.4"/><circle cx="85" cy="192" r="2.6" fill="none" stroke="#444" stroke-width="1"/><path d="M81.5 195.8 L88.8 188" stroke="#444" stroke-width="1"/></g><g shape-rendering="geometricPrecision"><rect x="105.6" y="186.6" width="6.4" height="6.4" fill="#fff" stroke="#333" stroke-width="1.3"/><path d="M107 189.8 H110.6 M108.8 188 V191.6" stroke="#333" stroke-width="1"/><path d="M112.3 189.8 H114.5" stroke="#333" stroke-width="1"/><path d="M113.3 188 L116.3 184.4 L119.3 188 Z M113.3 193.8 L116.3 197.4 L119.3 193.8 Z" fill="#c8c8f0" stroke="#333" stroke-width="1"/><path d="M116.3 189 V193" stroke="#333" stroke-width="1" stroke-dasharray="1 1"/></g><g shape-rendering="geometricPrecision"><rect x="132.6" y="187.3" width="6" height="6" fill="#fff" stroke="#333" stroke-width="1.3"/><path d="M134.3 190.3 H137" stroke="#333" stroke-width="1"/><path d="M139 190.3 H141" stroke="#333" stroke-width="1"/><path d="M139.3 186 H145.3 L142.3 189.6 Z M139.3 194.6 H145.3 L142.3 191 Z" fill="#c8c8f0" stroke="#333" stroke-width="1"/><circle cx="142.4" cy="184.3" r=".6" fill="#333"/><circle cx="142.4" cy="196.8" r=".6" fill="#333"/></g><g shape-rendering="geometricPrecision"><path d="M162.7 184.5 H169.3 L172.6 187.8 V194.4 L169.3 197.7 H162.7 L159.4 194.4 V187.8 Z" fill="#f8f8f8" stroke="#2a2a2a" stroke-width="1"/><rect x="165.2" y="187" width="1.8" height="1.8" fill="#2338b8"/><rect x="165.2" y="189.8" width="1.8" height="5" fill="#2338b8"/></g><g shape-rendering="geometricPrecision"><path d="M186.8 187.5 H189 V196.5 H186.8 Z" fill="#fff" stroke="#222" stroke-width="1.1"/><path d="M188.7 184.8 H193.5 L195.3 186.6 V196.5 H188.7 Z" fill="#fff" stroke="#222" stroke-width="1.1"/><path d="M195 190 L199 191.5 L199.8 194.5 L197.5 197.3 L194 197.5 L192.8 195" fill="#fff" stroke="#222" stroke-width="1.1"/><path d="M196.3 192 V194.4 H198" fill="none" stroke="#222" stroke-width="1"/><path d="M195.5 190.3 Q192 190 191.8 194.5" fill="none" stroke="#2f55c0" stroke-width="1.6"/><path d="M189.8 193.8 H193.8 L191.8 197.6 Z" fill="#2f55c0"/></g><g shape-rendering="geometricPrecision"><path d="M216 186.5 H220.3 V195.5 H224 M220.3 190.3 H224" fill="none" stroke="#444" stroke-width="1"/><circle cx="215.7" cy="186.5" r="2.2" fill="#d0d4f4" stroke="#444" stroke-width="1"/><circle cx="224.6" cy="189.8" r="2.2" fill="#d0d4f4" stroke="#444" stroke-width="1"/><circle cx="224.6" cy="195.8" r="2.2" fill="#d0d4f4" stroke="#444" stroke-width="1"/><path d="M213.7 190.8 H216.6 L218 192.2 V197.7 H213.7 Z" fill="#fff" stroke="#444" stroke-width="1"/></g><g transform="translate(15,13)" shape-rendering="geometricPrecision"><path d="M4.2 6 C3.6 9 3.8 12 4.6 14 L3 15.3 L4 16.3 L8 15.2 L11.5 13.6 L9.5 10.5 L6.8 8 Z" fill="#3f3f3f"/><path d="M7 5.6 L11.8 4.9 L13.6 6.4 L12.6 10 L11.2 13.4 L8.4 9.2 Z" fill="#7d7d7d"/><path d="M12.3 9.6 L17.6 3.1 L18.6 4.3 L14.2 10.8 L12.8 11.5 Z" fill="#3a3a3a"/><path d="M5.4 3.1 L15.7 16.5" stroke="#9a9a9a" stroke-width="0.9"/></g><g transform="translate(624,16)" shape-rendering="geometricPrecision"><path d="M4.2 6 C3.6 9 3.8 12 4.6 14 L3 15.3 L4 16.3 L8 15.2 L11.5 13.6 L9.5 10.5 L6.8 8 Z" fill="#3f3f3f"/><path d="M7 5.6 L11.8 4.9 L13.6 6.4 L12.6 10 L11.2 13.4 L8.4 9.2 Z" fill="#7d7d7d"/><path d="M12.3 9.6 L17.6 3.1 L18.6 4.3 L14.2 10.8 L12.8 11.5 Z" fill="#3a3a3a"/><path d="M5.4 3.1 L15.7 16.5" stroke="#9a9a9a" stroke-width="0.9"/></g></svg><svg class="ov" width="1108" height="485" shape-rendering="geometricPrecision">
<defs>
 <linearGradient id="bg1" x1="0" y1="0" x2="1" y2="0.3"><stop offset="0" stop-color="#fff" stop-opacity="0"/><stop offset=".5" stop-color="#f6f6f6"/><stop offset="1" stop-color="#d8d8d8"/></linearGradient>
 <linearGradient id="card" x1="0" y1="0" x2="0.6" y2="1"><stop offset="0" stop-color="#eef4fb"/><stop offset=".5" stop-color="#cfe2f3"/><stop offset="1" stop-color="#9fc6e4"/></linearGradient>
 <linearGradient id="srvf" x1="0" y1="0" x2="0" y2="1"><stop offset="0" stop-color="#3a3a3a"/><stop offset="1" stop-color="#262626"/></linearGradient>
 <linearGradient id="srvs" x1="0" y1="0" x2="1" y2="0"><stop offset="0" stop-color="#9a9a9a"/><stop offset="1" stop-color="#4a4a4a"/></linearGradient>
 <linearGradient id="arr" x1="0" y1="0" x2="0" y2="1"><stop offset="0" stop-color="#0a86c8"/><stop offset=".6" stop-color="#1aa6e2"/><stop offset="1" stop-color="#28b8f2"/></linearGradient>
 <linearGradient id="led" x1="0" y1="0" x2="1" y2="0"><stop offset="0" stop-color="#1b6fb0" stop-opacity="0"/><stop offset=".4" stop-color="#3cb8ff"/><stop offset="1" stop-color="#7fd6ff"/></linearGradient>
 <linearGradient id="grn" x1="0" y1="0" x2="1" y2="1"><stop offset="0" stop-color="#5cb845"/><stop offset=".5" stop-color="#2a8a35"/><stop offset="1" stop-color="#17692a"/></linearGradient>
 <linearGradient id="grn2" x1="1" y1="0" x2="0" y2="1"><stop offset="0" stop-color="#1a6e2c"/><stop offset=".5" stop-color="#2f9a3a"/><stop offset="1" stop-color="#1d7a30"/></linearGradient>
 <linearGradient id="mg" x1="0" y1="0" x2="1" y2="0"><stop offset=".35" stop-color="#000"/><stop offset="1" stop-color="#fff"/></linearGradient>
 <radialGradient id="bez" cx=".4" cy=".35" r=".7"><stop offset="0" stop-color="#ffffff"/><stop offset=".75" stop-color="#d0d0d0"/><stop offset="1" stop-color="#8c8c8c"/></radialGradient>
</defs>
<!-- D1 image -->
<rect x="500" y="40" width="109" height="101" fill="url(#bg1)"/>
<mask id="m1"><rect x="500" y="40" width="109" height="101" fill="url(#mg)"/></mask><g fill="none" stroke="#bfc6c8" stroke-width=".55" mask="url(#m1)"><path d="M520 141 Q545 110 590 75"/><path d="M524 141 Q549 110 594 75"/><path d="M528 141 Q553 110 598 75"/><path d="M532 141 Q557 110 602 75"/><path d="M536 141 Q561 110 606 75"/><path d="M540 141 Q565 110 610 75"/><path d="M544 141 Q569 110 614 75"/><path d="M548 141 Q573 110 618 75"/><path d="M552 141 Q577 110 622 75"/><path d="M556 141 Q581 110 626 75"/><path d="M560 141 Q585 110 630 75"/><path d="M564 141 Q589 110 634 75"/><path d="M568 141 Q593 110 638 75"/><path d="M572 141 Q597 110 642 75"/><path d="M576 141 Q601 110 646 75"/><path d="M580 141 Q605 110 650 75"/><path d="M584 141 Q609 110 654 75"/><path d="M588 141 Q613 110 658 75"/><path d="M592 141 Q617 110 662 75"/><path d="M596 141 Q621 110 666 75"/><path d="M600 141 Q625 110 670 75"/><path d="M604 141 Q629 110 674 75"/><path d="M608 141 Q633 110 678 75"/><path d="M612 141 Q637 110 682 75"/><path d="M616 141 Q641 110 686 75"/></g><rect x="608" y="40" width="1" height="101" fill="#c0c0c0"/>
<rect x="510.5" y="64.5" width="46" height="60" fill="url(#card)" stroke="#8a9aa8"/>
<g fill="none" stroke="#3a3a3a" stroke-width="1">
 <circle cx="534.5" cy="67.8" r="2" fill="#666"/>
 <path d="M534.5 70 V75"/>
 <rect x="524.5" y="75.5" width="19" height="8.5" rx="3" fill="#e8f1fa"/>
 <path d="M534.5 84 V88"/>
 <path d="M523.5 91.5 H546 M523.5 91.5 V96 M546 91.5 V96"/>
 <rect x="514" y="96.3" width="19" height="10" rx="3.5" fill="#d4e6f4"/>
 <rect x="535.5" y="96.3" width="19" height="10" rx="3.5" fill="#d4e6f4"/>
 <path d="M523.5 106.5 V112 H546 V106.5 M534.5 112 V117"/>
 <circle cx="534.5" cy="120" r="2.3" stroke-width="1.5" fill="#fff"/>
</g>
<path d="M534.5 88.8 L537.5 91.5 L534.5 94.2 L531.5 91.5 Z" fill="#fff" stroke="#7ab" stroke-width=".8"/>
<!-- server -->
<path d="M551 53 L562 57 L562 126 L556 122 L551 60 Z" fill="url(#srvs)"/>
<path d="M551 52.5 L592 52 L604 55.5 L562 57 Z" fill="#c9c9c9"/>
<rect x="562" y="56.5" width="42" height="69" fill="url(#srvf)"/>
<g fill="#151515"><rect x="562" y="66" width="42" height="1.6"/><rect x="562" y="75.5" width="42" height="1.6"/><rect x="562" y="85" width="42" height="1.6"/><rect x="562" y="94.5" width="42" height="1.6"/></g>
<g fill="url(#led)"><rect x="586" y="66.2" width="17" height="2"/><rect x="586" y="75.7" width="17" height="2"/><rect x="586" y="85.2" width="17" height="2"/><rect x="586" y="94.7" width="17" height="2"/></g>
<path d="M556 122 L562 120.5 H604 V127.5 L562 129 Z" fill="#111"/>
<rect x="595" y="122" width="5" height="2.4" fill="#bbb"/>
<!-- arrow -->
<path d="M538.9 56.8 L544.7 61.8 C548 56 553 50 559 49.4 C566 49 574 53 579.4 63.4 C576 60 571 57.5 567 57.7 C561 58 557 63 554.6 68.4 L561.2 73.3 L543.9 75.8 Z" fill="url(#arr)"/>

<!-- D2 image -->
<rect x="985" y="43" width="109" height="101" fill="url(#bg1)"/>
<mask id="m2"><rect x="985" y="43" width="109" height="101" fill="url(#mg)"/></mask><g fill="none" stroke="#bfc6c8" stroke-width=".55" mask="url(#m2)"><path d="M900 144 Q960 100 1040 40"/><path d="M904 144 Q964 100 1044 40"/><path d="M908 144 Q968 100 1048 40"/><path d="M912 144 Q972 100 1052 40"/><path d="M916 144 Q976 100 1056 40"/><path d="M920 144 Q980 100 1060 40"/><path d="M924 144 Q984 100 1064 40"/><path d="M928 144 Q988 100 1068 40"/><path d="M932 144 Q992 100 1072 40"/><path d="M936 144 Q996 100 1076 40"/><path d="M940 144 Q1000 100 1080 40"/><path d="M944 144 Q1004 100 1084 40"/><path d="M948 144 Q1008 100 1088 40"/><path d="M952 144 Q1012 100 1092 40"/><path d="M956 144 Q1016 100 1096 40"/><path d="M960 144 Q1020 100 1100 40"/><path d="M964 144 Q1024 100 1104 40"/><path d="M968 144 Q1028 100 1108 40"/><path d="M972 144 Q1032 100 1112 40"/><path d="M976 144 Q1036 100 1116 40"/><path d="M980 144 Q1040 100 1120 40"/><path d="M984 144 Q1044 100 1124 40"/><path d="M988 144 Q1048 100 1128 40"/><path d="M992 144 Q1052 100 1132 40"/><path d="M996 144 Q1056 100 1136 40"/><path d="M1000 144 Q1060 100 1140 40"/><path d="M1004 144 Q1064 100 1144 40"/><path d="M1008 144 Q1068 100 1148 40"/><path d="M1012 144 Q1072 100 1152 40"/><path d="M1016 144 Q1076 100 1156 40"/><path d="M1020 144 Q1080 100 1160 40"/><path d="M1024 144 Q1084 100 1164 40"/><path d="M1028 144 Q1088 100 1168 40"/><path d="M1032 144 Q1092 100 1172 40"/><path d="M1036 144 Q1096 100 1176 40"/><path d="M1040 144 Q1100 100 1180 40"/><path d="M1044 144 Q1104 100 1184 40"/><path d="M1048 144 Q1108 100 1188 40"/><path d="M1052 144 Q1112 100 1192 40"/><path d="M1056 144 Q1116 100 1196 40"/><path d="M1060 144 Q1120 100 1200 40"/><path d="M1064 144 Q1124 100 1204 40"/><path d="M1068 144 Q1128 100 1208 40"/><path d="M1072 144 Q1132 100 1212 40"/><path d="M1076 144 Q1136 100 1216 40"/><path d="M1080 144 Q1140 100 1220 40"/><path d="M1084 144 Q1144 100 1224 40"/><path d="M1088 144 Q1148 100 1228 40"/><path d="M1092 144 Q1152 100 1232 40"/><path d="M1096 144 Q1156 100 1236 40"/></g><rect x="1093" y="43" width="1" height="101" fill="#c0c0c0"/>
<path d="M996.5 51 L1013.8 53 L1013.8 127 L996.5 120 Z" fill="#4d4d4d"/>
<path d="M996.5 49.7 L1040 49.5 L1054 51.5 L1013.8 53 Z" fill="#7a7a7a"/>
<rect x="1013.8" y="52.5" width="40.2" height="74" fill="url(#srvf)"/>
<g fill="#161616"><rect x="1013.8" y="63" width="40.2" height="1.6"/><rect x="1013.8" y="72.8" width="40.2" height="1.6"/><rect x="1013.8" y="82.6" width="40.2" height="1.6"/></g>
<g stroke="#6a6a6a" stroke-width=".8"><path d="M997 60 L1013.8 63 M997 70 L1013.8 73 M997 80 L1013.8 83"/></g>
<g fill="url(#led)"><rect x="1038" y="63.3" width="15" height="2"/><rect x="1038" y="73.1" width="15" height="2"/></g>
<path d="M996.5 118 L1013.8 124 H1040 V127.5 H1013.8 L996.5 121 Z" fill="#222"/>
<circle cx="1055.5" cy="110.2" r="25" fill="url(#bez)"/>
<circle cx="1055.5" cy="110.2" r="19.3" fill="#fff" stroke="#b0b0b0" stroke-width=".8"/>
<g stroke="#222" stroke-width=".7">
 <path d="M1055.5 92.5 V95.5 M1055.5 125 V128 M1037.8 110.2 H1040.8 M1070.2 110.2 H1073.2"/>
 <path d="M1055.5 111 V95" stroke-width="1.2"/><path d="M1046 110.6 H1064" stroke-width="1.2"/>
</g>
<g fill="#333"><circle cx="1063.5" cy="96.5" r=".6"/><circle cx="1069" cy="102" r=".6"/><circle cx="1069" cy="118" r=".6"/><circle cx="1063.5" cy="124" r=".6"/><circle cx="1047.5" cy="124" r=".6"/><circle cx="1042" cy="118" r=".6"/><circle cx="1042" cy="102" r=".6"/><circle cx="1047.5" cy="96.5" r=".6"/></g>
<path d="M1069.1 83.5 A30 30 0 0 0 1030.1 94.3 L1021.5 91.6 L1023.1 113.6 L1041 103.2 L1035.6 98.7 A23 23 0 0 1 1065.2 89.4 Z" fill="url(#grn)"/>
<path d="M1041.9 136.9 A30 30 0 0 0 1080.9 126.1 L1088.3 127.4 L1086.5 105.3 L1067.9 116.4 L1075.4 121.7 A23 23 0 0 1 1045.8 131.0 Z" fill="url(#grn2)"/>
</svg>
</body></html>
